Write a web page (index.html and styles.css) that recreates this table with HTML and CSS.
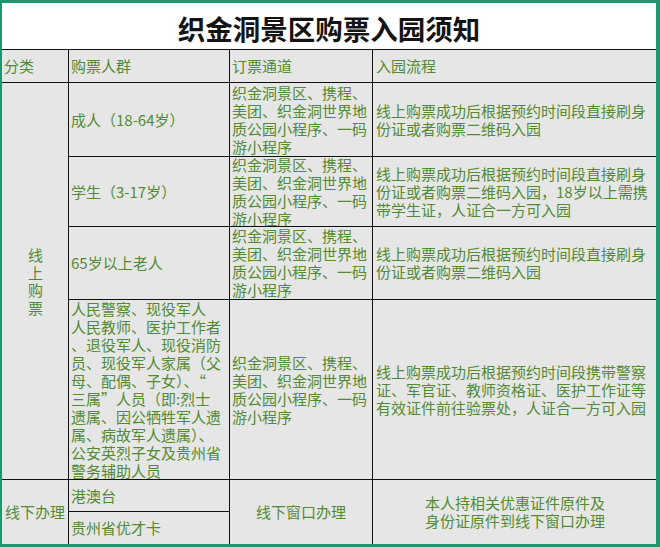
FILE: index.html
```html
<!DOCTYPE html>
<html lang="zh-CN">
<head>
<meta charset="utf-8">
<title>织金洞景区购票入园须知</title>
<link rel="stylesheet" href="styles.css">
</head>
<body>
<div class="sheet">
  <div class="title">织金洞景区购票入园须知</div>
  <div class="grid">
    <div class="cell">分类</div>
    <div class="cell">购票人群</div>
    <div class="cell">订票通道</div>
    <div class="cell last-col">入园流程</div>

    <div class="cell cat-online"><div class="vtext">线<br>上<br>购<br>票</div></div>

    <div class="cell"><div>成人（18-64岁）</div></div>
    <div class="cell"><div>织金洞景区、携程、<br>美团、织金洞世界地<br>质公园小程序、一码<br>游小程序</div></div>
    <div class="cell last-col"><div>线上购票成功后根据预约时间段直接刷身<br>份证或者购票二维码入园</div></div>

    <div class="cell"><div>学生（3-17岁）</div></div>
    <div class="cell"><div>织金洞景区、携程、<br>美团、织金洞世界地<br>质公园小程序、一码<br>游小程序</div></div>
    <div class="cell last-col"><div>线上购票成功后根据预约时间段直接刷身<br>份证或者购票二维码入园，18岁以上需携<br>带学生证，人证合一方可入园</div></div>

    <div class="cell"><div>65岁以上老人</div></div>
    <div class="cell"><div>织金洞景区、携程、<br>美团、织金洞世界地<br>质公园小程序、一码<br>游小程序</div></div>
    <div class="cell last-col"><div>线上购票成功后根据预约时间段直接刷身<br>份证或者购票二维码入园</div></div>

    <div class="cell"><div>人民警察、现役军人<br>人民教师、医护工作者<br>、退役军人、现役消防<br>员、现役军人家属（父<br>母、配偶、子女）、“<br>三属”人员（即:烈士<br>遗属、因公牺牲军人遗<br>属、病故军人遗属）、<br>公安英烈子女及贵州省<br>警务辅助人员</div></div>
    <div class="cell"><div>织金洞景区、携程、<br>美团、织金洞世界地<br>质公园小程序、一码<br>游小程序</div></div>
    <div class="cell last-col"><div>线上购票成功后根据预约时间段携带警察<br>证、军官证、教师资格证、医护工作证等<br>有效证件前往验票处，人证合一方可入园</div></div>

    <div class="cell cat-offline last-row">线下办理</div>
    <div class="cell window last-row">线下窗口办理</div>
    <div class="cell note last-col last-row"><div>本人持相关优惠证件原件及<br>身份证原件到线下窗口办理</div></div>
    <div class="cell">港澳台</div>
    <div class="cell last-row">贵州省优才卡</div>
  </div>
</div>
</body>
</html>
```

FILE: styles.css
```css
html, body {
  margin: 0;
  padding: 0;
  background: #ffffff;
}

.sheet {
  box-sizing: border-box;
  width: 660px;
  height: 547px;
  border-style: solid;
  border-color: #1f966c;
  border-width: 3px 4px 3px 2px;
  background: #e6e6e6;
  font-family: "Noto Sans CJK SC", "Noto Sans", sans-serif;
  color: #528b33;
  font-size: 15px;
  overflow: hidden;
}

.title {
  box-sizing: border-box;
  height: 47px;
  background: #ffffff;
  border-bottom: 1px solid #111111;
  display: flex;
  align-items: center;
  justify-content: center;
  padding-top: 4px;
  font-size: 27.5px;
  font-weight: 700;
  color: #141414;
  letter-spacing: 0;
}

.grid {
  display: grid;
  grid-template-columns: 67px 161px 143px 283px;
  grid-template-rows: 33px 74px 70px 73px 180px 32px 32px;
}

.cell {
  box-sizing: border-box;
  border-right: 1px solid #111111;
  border-bottom: 1px solid #111111;
  padding: 0 2px;
  display: flex;
  align-items: center;
  overflow: hidden;
  line-height: 18px;
  white-space: nowrap;
}

.last-col {
  border-right: none;
  padding-left: 3px;
}

.last-row {
  border-bottom: none;
}

.cat-online {
  grid-column: 1;
  grid-row: 2 / span 4;
  justify-content: center;
}

.vtext {
  line-height: 17.5px;
  text-align: center;
  padding-left: 1px;
}

.cat-offline {
  grid-column: 1;
  grid-row: 6 / span 2;
  justify-content: center;
  padding: 0;
}

.window {
  grid-column: 3;
  grid-row: 6 / span 2;
  justify-content: center;
}

.note {
  grid-column: 4;
  grid-row: 6 / span 2;
  justify-content: center;
  text-align: center;
}
```
